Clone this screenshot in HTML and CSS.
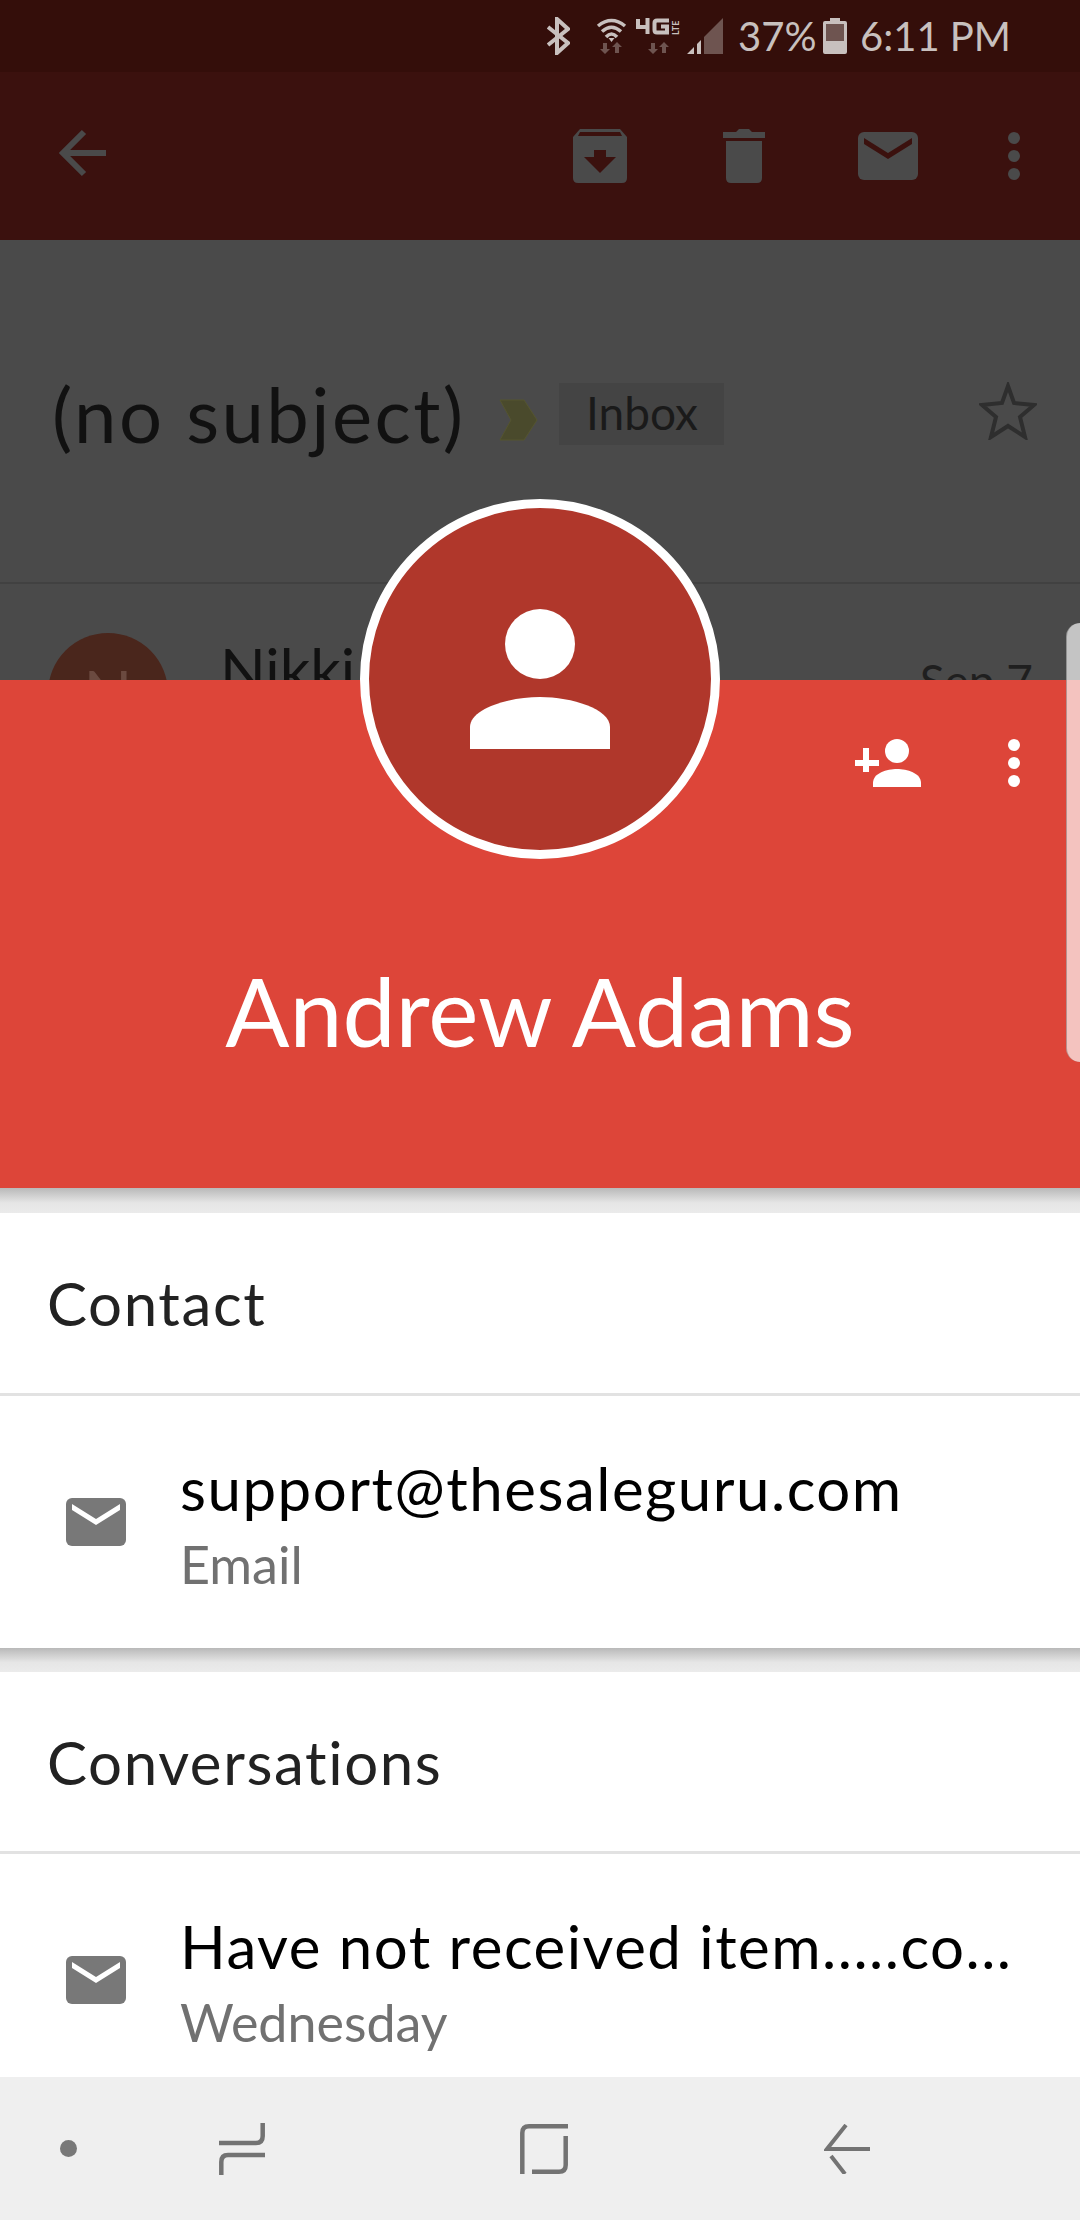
FILE: index.html
```html
<!DOCTYPE html>
<html lang="en">

<head>
  <meta charset="UTF-8">
  <meta name="viewport" content="width=device-width, initial-scale=1.0">
  <title>Contact card</title>
  <link rel="stylesheet" href="styles.css">
</head>

<body>
  <div class="screen">
    <div class="status">
      <svg class="st-bt" viewBox="0 0 23 38"><path d="M1 10 L21 26 L10 36 V2 L21 12 L1 28" fill="none" stroke="#c8c0be" stroke-width="4"/></svg>
      <svg class="st-wifi" viewBox="0 0 31 38">
        <path d="M2 9 Q15.500 -2 29 9 M6 14.500 Q15.500 6 25 14.500 M10 20 Q15.500 14 21 20" fill="none" stroke="#c8c0be" stroke-width="3.500"/>
        <path d="M12.500 21 H18.500 L15.500 25 Z" fill="#c8c0be"/>
        <path d="M7 26 H11 V32 H14 L9 37 L4 32 H7 Z M23 36 H19 V30 H16 L21 25 L26 30 H23 Z" fill="#6e5450"/>
      </svg>
      <svg class="st-4g" viewBox="0 0 45 38">
        <path d="M2 2 V10 H13 M11.500 1 V17 M33 3.500 H21 Q18.500 3.500 18.500 6 V13 Q18.500 15.500 21 15.500 H31 V9.500 H25" fill="none" stroke="#c8c0be" stroke-width="4"/>
        <text class="st-lte" transform="translate(43 18) rotate(-90)">LTE</text>
        <path d="M15 26 H19 V32 H22 L17 37 L12 32 H15 Z M30 36 H26 V30 H23 L28 25 L33 30 H30 Z" fill="#6e5450"/>
      </svg>
      <svg class="st-signal" viewBox="0 0 36 36">
        <path d="M0 36 L7 29 V36 Z M10 36 V26 L14 22 V36 Z" fill="#c8c0be"/>
        <path d="M17 36 V19 L36 0 V36 Z" fill="#6e5450"/>
      </svg>
      <span class="st-pct">37%</span>
      <svg class="st-batt" viewBox="0 0 24 36">
        <path d="M7 0 H17 V3 H22 Q24 3 24 5 V34 Q24 36 22 36 H2 Q0 36 0 34 V5 Q0 3 2 3 H7 Z" fill="#c8c0be"/>
        <rect x="3" y="6" width="18" height="17" fill="#6e5450"/>
      </svg>
      <span class="st-time">6:11 PM</span>
    </div>

    <div class="toolbar">
      <svg class="tb-back" viewBox="0 0 48 48"><path d="M48 24 H6 M26 3 L5 24 L26 45" fill="none" stroke="#4a4a4a" stroke-width="6"/></svg>
      <svg class="tb-archive" viewBox="0 0 54 54">
        <path d="M7 0 H47 L54 8 V49 Q54 54 49 54 H5 Q0 54 0 49 V8 Z" fill="#4a4a4a"/>
        <path d="M7 3 L5 7 H49 L47 3 Z M21 21 H33 V28 H43 L27 44 L11 28 H21 Z" fill="#3b110e"/>
      </svg>
      <svg class="tb-trash" viewBox="0 0 42 54">
        <path d="M0 3 H13 L16 0 H26 L29 3 H42 V9 H0 Z M3 12 H39 V49 Q39 54 34 54 H8 Q3 54 3 49 Z" fill="#4a4a4a"/>
      </svg>
      <svg class="tb-mail" viewBox="0 0 60 48">
        <rect width="60" height="48" rx="6" fill="#4a4a4a"/>
        <path d="M6 6 L30 21 L54 6 V12 L30 27 L6 12 Z" fill="#3b110e"/>
      </svg>
      <div class="dots dots-dim"><i></i><i></i><i></i></div>
    </div>

    <div class="mail">
      <div class="subject">
        <span class="subject-text">(no subject)</span>
        <svg class="marker" viewBox="0 0 39 42"><path d="M1 1 H25 L38 21 L25 41 H1 L12 21 Z" fill="#4a4a2c" stroke="#55552f" stroke-width="1"/></svg>
        <span class="label">Inbox</span>
        <svg class="star" viewBox="0 0 58 58"><path d="M29 4 L35 21 L55 23 L41 35 L46 55 L29 44 L12 55 L17 35 L3 23 L23 21 Z" fill="none" stroke="#2e2e2e" stroke-width="4"/></svg>
      </div>
      <div class="sender">
        <div class="sender-pic">N</div>
        <span class="sender-name">Nikki</span>
        <span class="sender-date">Sep 7</span>
      </div>
    </div>

    <div class="card">
      <div class="head">
        <div class="head-actions">
          <svg class="add-person" viewBox="0 0 66 48">
            <path d="M8 9 H14 V21 H24 V27 H14 V33 H8 V27 H0 V21 H8 Z" fill="#fff"/>
            <circle cx="42" cy="12" r="12" fill="#fff"/>
            <path d="M18 48 V44 C18 34 32 30 42 30 C52 30 66 34 66 44 V48 Z" fill="#fff"/>
          </svg>
          <div class="dots"><i></i><i></i><i></i></div>
        </div>
        <div class="head-name">Andrew Adams</div>
      </div>

      <div class="gap"></div>
      <div class="sec-title sec-title-first">Contact</div>
      <div class="item item-contact">
        <svg class="item-icon" viewBox="0 0 60 48">
          <rect width="60" height="48" rx="6" fill="#787878"/>
          <path d="M6 6 L30 21 L54 6 V12 L30 27 L6 12 Z" fill="#fff"/>
        </svg>
        <div class="item-text">
          <div class="item-main">support@thesaleguru.com</div>
          <div class="item-sub">Email</div>
        </div>
      </div>

      <div class="gap gap-second"></div>
      <div class="sec-title">Conversations</div>
      <div class="item">
        <svg class="item-icon" viewBox="0 0 60 48">
          <rect width="60" height="48" rx="6" fill="#787878"/>
          <path d="M6 6 L30 21 L54 6 V12 L30 27 L6 12 Z" fill="#fff"/>
        </svg>
        <div class="item-text">
          <div class="item-main">Have not received item.....co...</div>
          <div class="item-sub">Wednesday</div>
        </div>
      </div>
    </div>

    <div class="nav">
      <span class="nav-dot"></span>
      <svg class="nav-recent" viewBox="0 0 46 52"><path d="M43.700 0 V13 Q43.700 20 37 20 H0 M46 32 H9 Q2.300 32 2.300 39 V52" fill="none" stroke="#737373" stroke-width="4.500"/></svg>
      <svg class="nav-home" viewBox="0 0 48 50"><path d="M2.300 50 V9 Q2.300 2.300 9 2.300 H48 M45.700 12 V41 Q45.700 47.700 39 47.700 H12" fill="none" stroke="#737373" stroke-width="4.500"/></svg>
      <svg class="nav-back" viewBox="0 0 46 50"><path d="M22 1 L3 25 H46 M7 32 L21 50" fill="none" stroke="#737373" stroke-width="4"/></svg>
    </div>

    <div class="avatar">
      <svg class="avatar-icon" viewBox="0 0 140 140">
        <circle cx="70" cy="35" r="35" fill="#fff"/>
        <path d="M0 140 V118 C0 100 38 88 70 88 C102 88 140 100 140 118 V140 Z" fill="#fff"/>
      </svg>
    </div>
    <div class="scrollbar"></div>
  </div>
</body>

</html>
```
FILE: styles.css
```css
* {
  box-sizing: border-box;
}

body {
  margin: 0;
  font-family: "Lato", "Liberation Sans", sans-serif;
}

svg {
  display: block;
  flex: none;
}

.screen {
  position: relative;
  width: 1080px;
  height: 2220px;
  overflow: hidden;
  display: flex;
  flex-direction: column;
}

/* status bar */
.status {
  height: 72px;
  background: #340e0a;
  color: #c8c0be;
  display: flex;
  align-items: center;
  padding-left: 547px;
}

.st-bt {
  width: 23px;
  height: 38px;
}

.st-wifi {
  width: 31px;
  height: 38px;
  margin-left: 26px;
}

.st-4g {
  width: 45px;
  height: 38px;
  margin-left: 9px;
}

.st-lte {
  font-size: 9px;
  font-weight: 700;
  fill: #c8c0be;
}

.st-signal {
  width: 36px;
  height: 36px;
  margin-left: 6px;
}

.st-pct {
  width: 85px;
  margin-left: 15px;
  font-size: 40px;
}

.st-batt {
  width: 24px;
  height: 36px;
}

.st-time {
  margin-left: 13px;
  font-size: 40px;
  white-space: nowrap;
}

/* dimmed toolbar */
.toolbar {
  height: 168px;
  background: #3b110e;
  display: flex;
  align-items: center;
  padding-left: 58px;
}

.tb-back {
  width: 48px;
  height: 48px;
  margin-bottom: 6px;
}

.tb-archive {
  width: 54px;
  height: 54px;
  margin-left: 467px;
}

.tb-trash {
  width: 42px;
  height: 54px;
  margin-left: 96px;
}

.tb-mail {
  width: 60px;
  height: 48px;
  margin-left: 93px;
}

.dots {
  display: flex;
  flex-direction: column;
  gap: 6px;
  width: 12px;
}

.dots i {
  display: block;
  width: 12px;
  height: 12px;
  border-radius: 50%;
  background: #fff;
}

.dots-dim {
  margin-left: 90px;
}

.dots-dim i {
  background: #4a4a4a;
}

/* mail behind the card */
.mail {
  height: 440px;
  background: #4a4a4a;
  overflow: hidden;
}

.subject {
  height: 344px;
  border-bottom: 2px solid #414141;
  display: flex;
  align-items: center;
  padding: 0 43px 0 52px;
  color: #111;
}

.subject-text {
  font-size: 76px;
  line-height: 1;
  letter-spacing: 2.4px;
  white-space: nowrap;
  margin-top: 6px;
}

.marker {
  width: 39px;
  height: 42px;
  margin-left: 34px;
  margin-top: 18px;
}

.label {
  margin-left: 21px;
  margin-top: 6px;
  width: 165px;
  height: 62px;
  background: #444;
  font-size: 46px;
  line-height: 60px;
  text-align: center;
  color: #1a1a1a;
}

.star {
  width: 58px;
  height: 58px;
  margin-left: auto;
}

.sender {
  display: flex;
  align-items: flex-start;
  padding: 49px 47px 0 48px;
  color: #111;
}

.sender-pic {
  width: 120px;
  height: 120px;
  border-radius: 50%;
  background: #4a261c;
  color: #6b4a40;
  font-size: 64px;
  line-height: 120px;
  text-align: center;
}

.sender-name {
  margin-left: 52px;
  margin-top: 6px;
  font-size: 60px;
  line-height: 60px;
}

.sender-date {
  margin-left: auto;
  margin-top: 20px;
  font-size: 46px;
  color: #1f1f1f;
}

/* contact card */
.card {
  flex: 1;
  background: #fff;
  overflow: hidden;
}

.head {
  height: 508px;
  background: #dd4539;
  padding: 59px 0 0;
  color: #fff;
}

.head-actions {
  display: flex;
  justify-content: flex-end;
  align-items: flex-start;
  padding-right: 60px;
  height: 216px;
}

.add-person {
  width: 66px;
  height: 48px;
}

.head-actions .dots {
  margin-left: 87px;
}

.head-name {
  text-align: center;
  font-size: 95px;
  line-height: 110px;
}

.gap {
  height: 25px;
  background: linear-gradient(#b9b9b9, #e6e6e6 60%, #ebebeb);
}

.gap-second {
  height: 24px;
}

.sec-title {
  height: 182px;
  padding-left: 47px;
  border-bottom: 3px solid #e2e2e2;
  font-size: 60px;
  line-height: 181px;
  letter-spacing: 1.6px;
  color: #222;
}

.sec-title-first {
  height: 183px;
}

.item {
  display: flex;
  align-items: center;
  padding-left: 66px;
  height: 252px;
}

.item-icon {
  width: 60px;
  height: 48px;
}

.item-text {
  margin-left: 54px;
  margin-top: 8px;
}

.item-main {
  font-size: 60px;
  line-height: 76px;
  letter-spacing: 1.5px;
  color: #000;
  white-space: nowrap;
}

.item-sub {
  font-size: 52px;
  line-height: 76px;
  color: #717171;
}

/* soft keys */
.nav {
  height: 143px;
  background: #efefef;
  display: flex;
  align-items: center;
  padding-left: 60px;
}

.nav-dot {
  width: 17px;
  height: 17px;
  border-radius: 50%;
  background: #787878;
}

.nav-recent {
  width: 46px;
  height: 52px;
  margin-left: 142px;
}

.nav-home {
  width: 48px;
  height: 50px;
  margin-left: 255px;
}

.nav-back {
  width: 46px;
  height: 50px;
  margin-left: 256px;
}

/* overlays */
.avatar {
  position: absolute;
  left: 360px;
  top: 499px;
  width: 360px;
  height: 360px;
  border-radius: 50%;
  border: 9px solid #fff;
  background: #b0372b;
  display: flex;
  align-items: center;
  justify-content: center;
}

.avatar-icon {
  width: 140px;
  height: 140px;
}

.scrollbar {
  position: absolute;
  right: 0;
  top: 623px;
  width: 14px;
  height: 439px;
  border-radius: 14px 0 0 14px;
  background: rgba(255, 255, 255, 0.68);
  border-left: 1px solid rgba(0, 0, 0, 0.25);
}
```
